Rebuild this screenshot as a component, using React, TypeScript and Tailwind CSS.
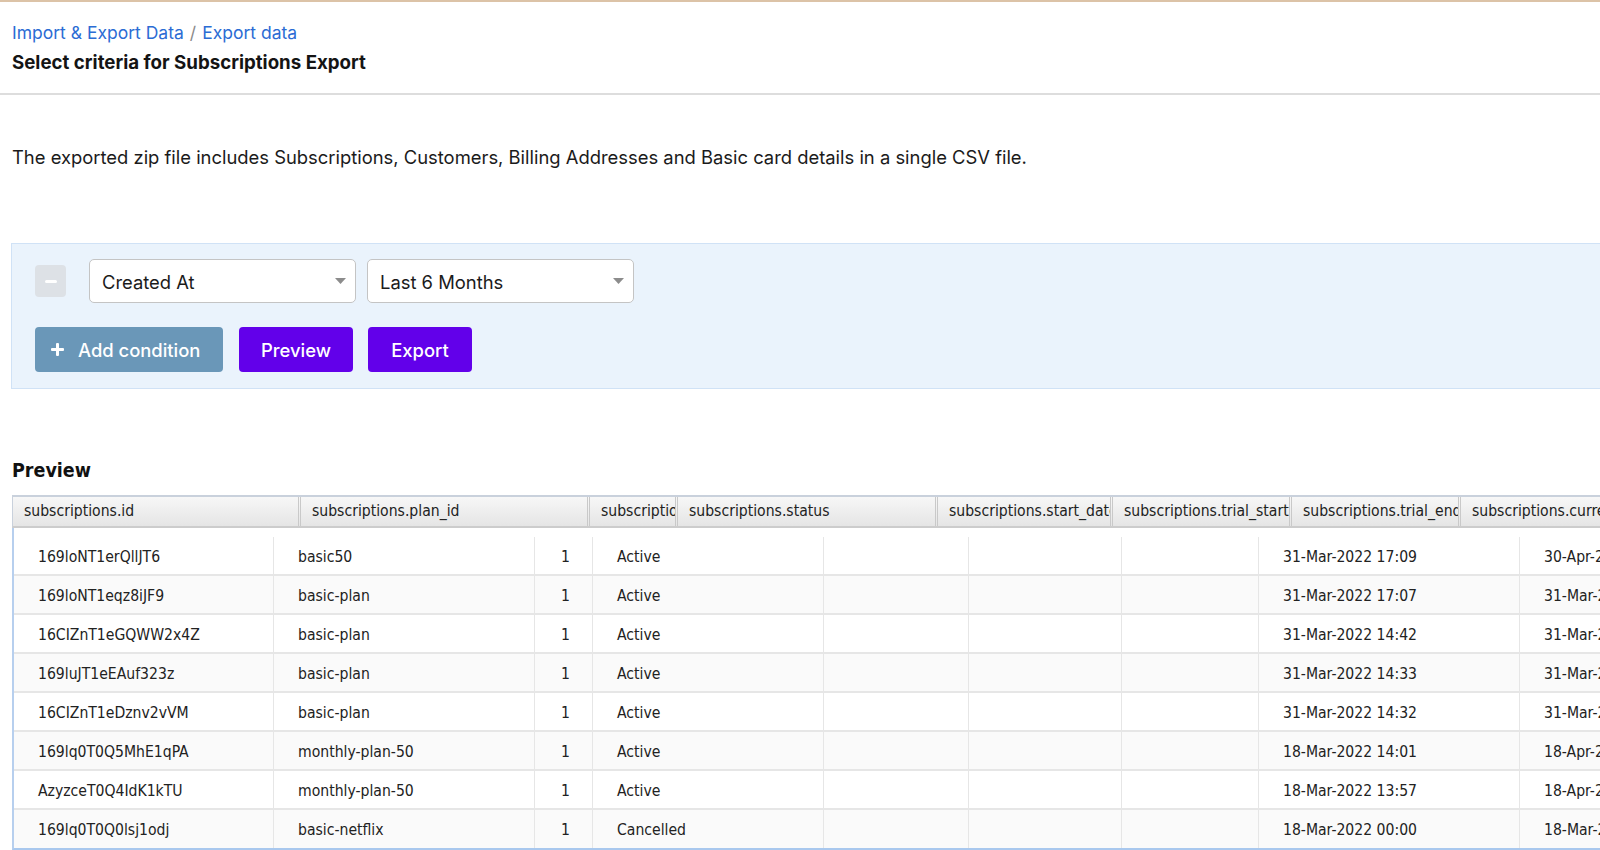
import React from "react";

const headerCols = [
  { label: "subscriptions.id", w: "w-[288px]" },
  { label: "subscriptions.plan_id", w: "w-[289px]" },
  { label: "subscriptions.plan_quantity", w: "w-[88px]" },
  { label: "subscriptions.status", w: "w-[260px]" },
  { label: "subscriptions.start_date", w: "w-[175px]" },
  { label: "subscriptions.trial_start", w: "w-[179px]" },
  { label: "subscriptions.trial_end", w: "w-[169px]" },
  { label: "subscriptions.current_term_start", w: "w-[300px]" },
];

const rows = [
  ["169loNT1erQllJT6", "basic50", "1", "Active", "31-Mar-2022 17:09", "30-Apr-2022 17:09"],
  ["169loNT1eqz8iJF9", "basic-plan", "1", "Active", "31-Mar-2022 17:07", "31-Mar-2022 17:07"],
  ["16CIZnT1eGQWW2x4Z", "basic-plan", "1", "Active", "31-Mar-2022 14:42", "31-Mar-2022 14:42"],
  ["169luJT1eEAuf323z", "basic-plan", "1", "Active", "31-Mar-2022 14:33", "31-Mar-2022 14:33"],
  ["16CIZnT1eDznv2vVM", "basic-plan", "1", "Active", "31-Mar-2022 14:32", "31-Mar-2022 14:32"],
  ["169lq0T0Q5MhE1qPA", "monthly-plan-50", "1", "Active", "18-Mar-2022 14:01", "18-Apr-2022 14:01"],
  ["AzyzceT0Q4IdK1kTU", "monthly-plan-50", "1", "Active", "18-Mar-2022 13:57", "18-Apr-2022 13:57"],
  ["169lq0T0Q0lsj1odj", "basic-netflix", "1", "Cancelled", "18-Mar-2022 00:00", "18-Mar-2022 00:00"],
];

function Caret() {
  return (
    <svg width="11" height="6" viewBox="0 0 11 6" className="shrink-0">
      <polygon points="0,0 11,0 5.5,6" fill="#8c8c8c" />
    </svg>
  );
}

function SelectBox({ value }: { value: string }) {
  return (
    <div className="flex h-[44px] w-[267px] items-center justify-between rounded-[5px] border border-[#c4c4c4] bg-white pl-3 pr-[9px] text-[18.4px] text-[#1b1b1b]">
      <span className="pt-[3px]">{value}</span>
      <Caret />
    </div>
  );
}

function Cell({
  w,
  children,
  right,
  last,
}: {
  w: string;
  children?: React.ReactNode;
  right?: boolean;
  last?: boolean;
}) {
  return (
    <div
      className={`${w} flex h-full shrink-0 items-center overflow-hidden whitespace-nowrap pt-[4px] ${
        last ? "" : "border-r border-[#e6e6e6]"
      } ${right ? "justify-end pr-[22px]" : "pl-[24px]"}`}
    >
      {children}
    </div>
  );
}

export default function App() {
  return (
    <div className="h-[850px] w-[1600px] overflow-hidden bg-white font-['Inter','Liberation_Sans',sans-serif] text-[#1b1b1b]">
      <div className="h-[2px] bg-[#dcc3a7]" />

      {/* page header */}
      <div className="px-3 pb-[19px] pt-[19px]">
        <div className="text-[17.5px] leading-[24px]">
          <span className="text-[#2b6cd4]">Import &amp; Export Data</span>
          <span className="mx-[6px] text-[#8a8a8a]">/</span>
          <span className="text-[#2b6cd4]">Export data</span>
        </div>
        <h1 className="mt-[5px] pt-[1px] text-[18.7px] font-bold leading-[24px] text-[#141414]">
          Select criteria for Subscriptions Export
        </h1>
      </div>
      <div className="mt-[-1px] h-[2px] bg-[#dddddd]" />

      <p className="mt-[50px] px-3 text-[18.4px] leading-[24px]">
        The exported zip file includes Subscriptions, Customers, Billing Addresses and Basic card details in a single CSV file.
      </p>

      {/* criteria panel */}
      <div className="-mr-4 ml-[11px] mt-[74px] border border-[#d0e2f6] bg-[#eaf3fc] pb-[16px] pl-[23px] pt-[15px]">
        <div className="flex items-center">
          <div className="flex h-[32px] w-[31px] items-center justify-center rounded-[4px] bg-[#dde1e6]">
            <div className="h-[3px] w-[12px] rounded-full bg-white" />
          </div>
          <div className="ml-[23px] flex gap-[11px]">
            <SelectBox value="Created At" />
            <SelectBox value="Last 6 Months" />
          </div>
        </div>
        <div className="mt-[24px] flex items-center text-[18.4px] font-medium text-white">
          <button className="flex h-[45px] w-[188px] items-center gap-[14px] rounded-[4px] bg-[#6a97b8] pl-[16px]">
            <svg width="13" height="13" viewBox="0 0 13 13" className="shrink-0">
              <rect x="5" y="0" width="3" height="13" rx="1" fill="#ffffff" />
              <rect x="0" y="5" width="13" height="3" rx="1" fill="#ffffff" />
            </svg>
            <span className="pt-[2px]">Add condition</span>
          </button>
          <button className="ml-[16px] h-[45px] w-[114px] rounded-[4px] bg-[#6200ea] pt-[2px]">Preview</button>
          <button className="ml-[15px] h-[45px] w-[104px] rounded-[4px] bg-[#6200ea] pt-[2px]">Export</button>
        </div>
      </div>

      <h2 className="mt-[70px] px-3 font-['DejaVu_Sans_Condensed','DejaVu_Sans',sans-serif] text-[19.5px] font-bold leading-[24px] text-[#111111]">
        Preview
      </h2>

      {/* preview grid */}
      <div className="ml-3 mt-[12px] w-[1800px] font-['DejaVu_Sans_Condensed','DejaVu_Sans',sans-serif] text-[15.6px] text-[#222222]">
        <div className="flex h-[33px] border-b-2 border-l border-t-2 border-b-[#cccccc] border-l-[#c9d1dc] border-t-[#c9d1dc] bg-linear-to-b from-[#f7f7f7] to-[#e5e5e5]">
          {headerCols.map((c, i) => (
            <div
              key={c.label}
              className={`${c.w} flex shrink-0 items-center overflow-hidden whitespace-nowrap pl-[11px] ${
                i < headerCols.length - 1 ? "border-r-[3px] border-double border-[#c9c9c9]" : ""
              }`}
            >
              {c.label}
            </div>
          ))}
        </div>
        <div className="border-b-2 border-l-2 border-b-[#a9c8ee] border-l-[#b7cfee] pt-[9px]">
          {rows.map((r, i) => (
            <div
              key={r[0]}
              className={`flex ${
                i < rows.length - 1 ? "h-[39px] border-b-2 border-[#e6e6e6]" : "h-[38px]"
              } ${i % 2 === 1 ? "bg-[#fafafa]" : "bg-white"}`}
            >
              <Cell w="w-[260px]">{r[0]}</Cell>
              <Cell w="w-[261px]">{r[1]}</Cell>
              <Cell w="w-[58px]" right>
                {r[2]}
              </Cell>
              <Cell w="w-[231px]">{r[3]}</Cell>
              <Cell w="w-[145px]" />
              <Cell w="w-[153px]" />
              <Cell w="w-[137px]" />
              <Cell w="w-[261px]">{r[4]}</Cell>
              <Cell w="w-[300px]" last>
                {r[5]}
              </Cell>
            </div>
          ))}
        </div>
      </div>
    </div>
  );
}
